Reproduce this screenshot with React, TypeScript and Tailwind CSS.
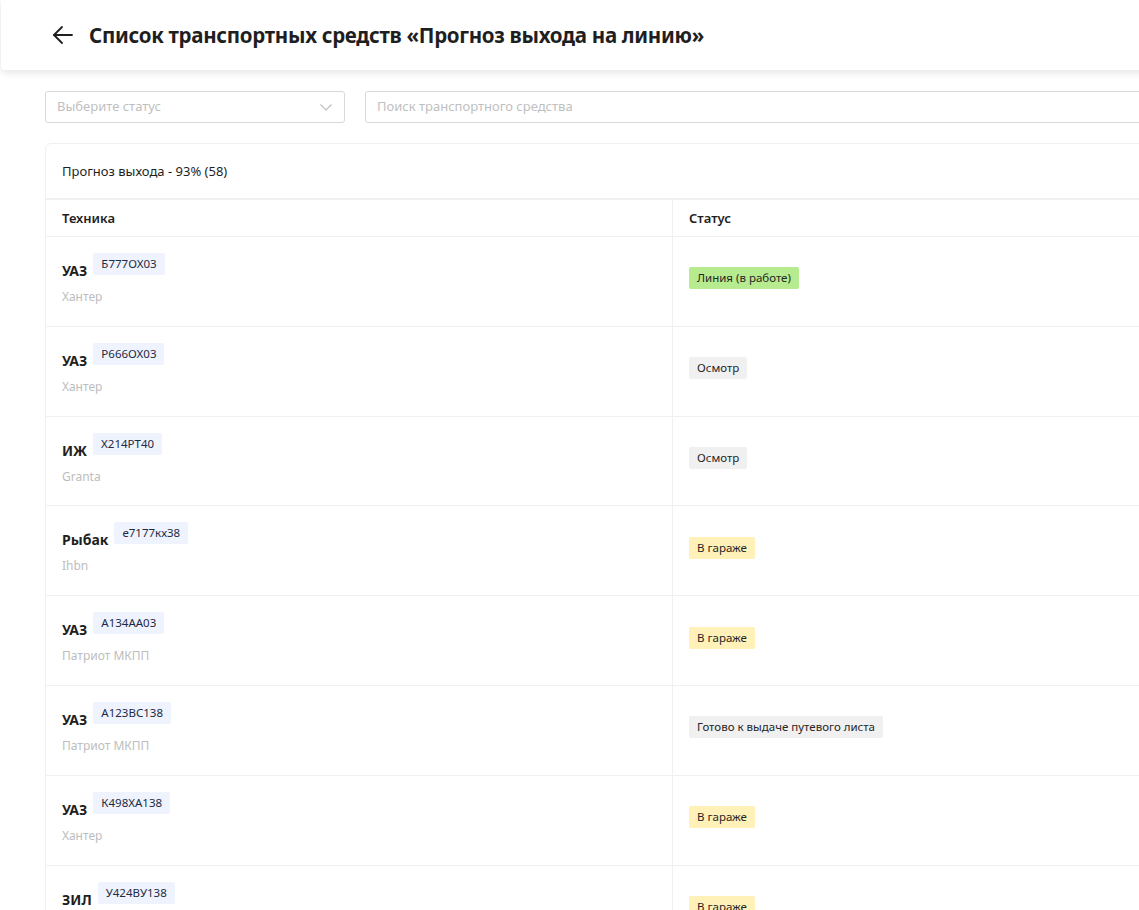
import React from 'react';

type Status = 'line' | 'check' | 'garage' | 'ready';

interface Vehicle {
  id: number;
  brand: string;
  plate: string;
  model: string;
  status: Status;
}

const STATUS_LABEL: Record<Status, string> = {
  line: 'Линия (в работе)',
  check: 'Осмотр',
  garage: 'В гараже',
  ready: 'Готово к выдаче путевого листа',
};

const STATUS_CLASS: Record<Status, string> = {
  line: 'bg-[#b7eb8f]',
  check: 'bg-[#f0f0f0]',
  garage: 'bg-[#fff1b8]',
  ready: 'bg-[#f0f0f0]',
};

const vehicles: Vehicle[] = [
  { id: 1, brand: 'УАЗ', plate: 'Б777ОХ03', model: 'Хантер', status: 'line' },
  { id: 2, brand: 'УАЗ', plate: 'Р666ОХ03', model: 'Хантер', status: 'check' },
  { id: 3, brand: 'ИЖ', plate: 'Х214РТ40', model: 'Granta', status: 'check' },
  { id: 4, brand: 'Рыбак', plate: 'е7177кх38', model: 'Ihbn', status: 'garage' },
  { id: 5, brand: 'УАЗ', plate: 'А134АА03', model: 'Патриот МКПП', status: 'garage' },
  { id: 6, brand: 'УАЗ', plate: 'А123ВС138', model: 'Патриот МКПП', status: 'ready' },
  { id: 7, brand: 'УАЗ', plate: 'К498ХА138', model: 'Хантер', status: 'garage' },
  { id: 8, brand: 'ЗИЛ', plate: 'У424ВУ138', model: 'Бычок', status: 'garage' },
];

export default function App() {
  return (
    <div
      className="h-screen w-screen overflow-hidden bg-white text-[#1f1f1f]"
      style={{ fontFamily: '"Noto Sans", "Open Sans", sans-serif' }}
    >
      <div className="w-[1400px]">
        {/* Header */}
        <div className="h-[70px] bg-white shadow-[0_2px_8px_rgba(0,0,0,0.12)] flex items-center pl-[50px] gap-[14px] ml-[1px] rounded-bl-[4px]">
          <svg width="24" height="24" viewBox="0 0 24 24" fill="none" stroke="#1f1f1f" strokeWidth="1.8" strokeLinecap="round" strokeLinejoin="round">
            <path d="M21 12H3" />
            <path d="M11 4l-8 8 8 8" />
          </svg>
          <h1 className="text-[20.5px] font-bold tracking-[-0.3px] mt-[1px]">
            Список транспортных средств «Прогноз выхода на линию»
          </h1>
        </div>

        {/* Filters */}
        <div className="flex gap-[20px] px-[45px] pt-[21px]">
          <div className="w-[300px] h-[32px] border border-[#d9d9d9] rounded-[3px] flex items-center justify-between px-[11px]">
            <span className="text-[13px] text-[#bfbfbf]">Выберите статус</span>
            <svg width="14" height="14" viewBox="0 0 14 14" fill="none" stroke="#bfbfbf" strokeWidth="1.2">
              <path d="M1.5 4.5L7 10l5.5-5.5" />
            </svg>
          </div>
          <div className="flex-1 h-[32px] border border-[#d9d9d9] rounded-[3px] flex items-center px-[11px]">
            <span className="text-[13px] text-[#bfbfbf]">Поиск транспортного средства</span>
          </div>
        </div>

        {/* Card */}
        <div className="mx-[45px] mt-[20px] border border-[#f0f0f0] rounded-[6px]">
          <div className="h-[56px] flex items-center px-[16px] border-b-2 border-[#f0f0f0]">
            <span className="text-[13px] mt-[1px]">Прогноз выхода - 93% (58)</span>
          </div>
          <div className="grid grid-cols-[627px_1fr] h-[37px] border-b border-[#f0f0f0] text-[13px] font-semibold">
            <div className="px-[16px] flex items-center border-r border-[#f0f0f0] pt-[2px]">Техника</div>
            <div className="px-[16px] flex items-center pt-[2px]">Статус</div>
          </div>
          {vehicles.map((v) => (
            <div key={v.id} className="grid grid-cols-[627px_1fr] h-[89.8px] border-b border-[#f0f0f0]">
              <div className="px-[16px] pt-[16px] border-r border-[#f0f0f0]">
                <div className="flex items-start gap-[6px]">
                  <span className="text-[14px] font-bold mt-[8px] leading-[20px]">{v.brand}</span>
                  <span className="text-[11.5px] leading-[22px] px-[8px] bg-[#eef3fd] rounded-[2px] text-[#1f2a44]">
                    {v.plate}
                  </span>
                </div>
                <div className="text-[12px] text-[#bdbdbd] mt-[7px]">{v.model}</div>
              </div>
              <div className="px-[16px] flex items-center pb-[6px]">
                <span className={`text-[11.5px] leading-[22px] px-[8px] rounded-[2px] text-[#262626] ${STATUS_CLASS[v.status]}`}>
                  {STATUS_LABEL[v.status]}
                </span>
              </div>
            </div>
          ))}
        </div>
      </div>
    </div>
  );
}
